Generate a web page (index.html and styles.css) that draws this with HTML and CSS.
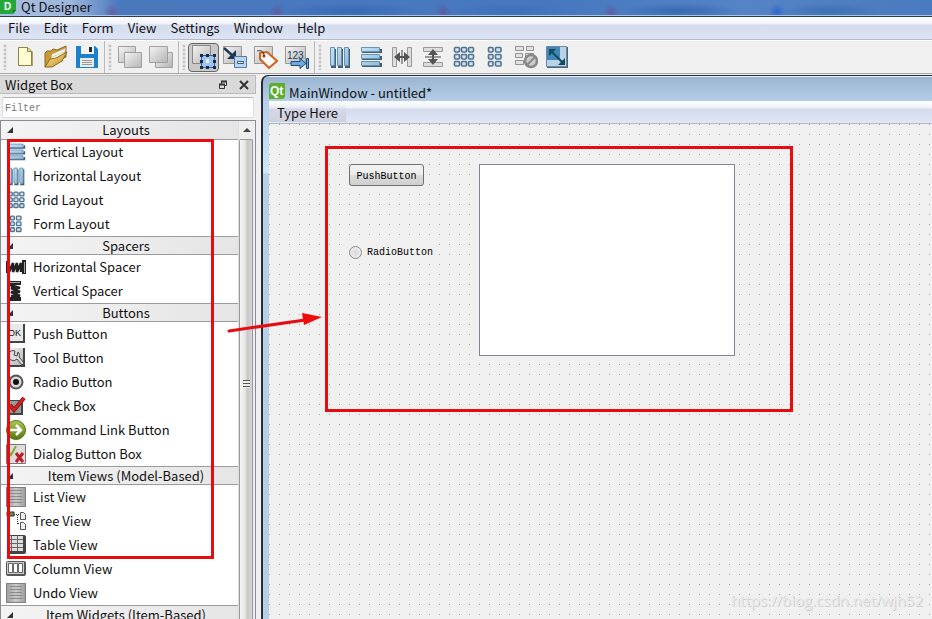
FILE: index.html
```html
<!DOCTYPE html>
<html lang="en">
<head>
<meta charset="utf-8">
<title>Qt Designer</title>
<link rel="stylesheet" href="styles.css">
</head>
<body>
<svg class="defs" aria-hidden="true">
  <defs>
    <linearGradient id="gGrey" x1="0" y1="0" x2="1" y2="1"><stop offset="0" stop-color="#f4f4f4"/><stop offset="1" stop-color="#b4b4b4"/></linearGradient>
    <linearGradient id="gBlue" x1="0" y1="0" x2="1" y2="1"><stop offset="0" stop-color="#c4e6fb"/><stop offset="1" stop-color="#8fbbdc"/></linearGradient>
    <linearGradient id="gGold" x1="0" y1="0" x2="1" y2="1"><stop offset="0" stop-color="#fbe7a0"/><stop offset="1" stop-color="#c78f1e"/></linearGradient>
    <linearGradient id="gGreen" x1="0" y1="0" x2="0" y2="1"><stop offset="0" stop-color="#a9c957"/><stop offset="1" stop-color="#56770f"/></linearGradient>
    <linearGradient id="gSheet"><stop offset="0" stop-color="#999"/><stop offset=".5" stop-color="#ccc"/><stop offset="1" stop-color="#999"/></linearGradient>
    <symbol id="vbars" viewBox="0 0 24 24"><path d="M7 4v18H3M14 4v18h-4M21 4v18h-4" fill="none" stroke="#3f5f7a" stroke-width="2"/><g fill="url(#gBlue)" stroke="#6f91ad"><path d="M2.500 2.500h4v18h-4zM9.500 2.500h4v18h-4zM16.500 2.500h4v18h-4z"/></g></symbol>
    <symbol id="hbars" viewBox="0 0 24 24"><path d="M3 7h19V4M3 14h19v-3M3 21h19v-3" fill="none" stroke="#3f5f7a" stroke-width="2"/><g fill="url(#gBlue)" stroke="#6f91ad"><path d="M2.500 2.500h18v4h-18zM2.500 9.500h18v4h-18zM2.500 16.500h18v4h-18z"/></g></symbol>
    <symbol id="grid" viewBox="0 0 24 24"><g fill="#cde7f8" stroke="#54728d" stroke-width="1.600"><rect x="2.500" y="2.500" width="5" height="4.500" rx="1"/><rect x="9.500" y="2.500" width="5" height="4.500" rx="1"/><rect x="16.500" y="2.500" width="5" height="4.500" rx="1"/><rect x="2.500" y="9.500" width="5" height="4.500" rx="1"/><rect x="9.500" y="9.500" width="5" height="4.500" rx="1"/><rect x="16.500" y="9.500" width="5" height="4.500" rx="1"/><rect x="2.500" y="16.500" width="5" height="4.500" rx="1"/><rect x="9.500" y="16.500" width="5" height="4.500" rx="1"/><rect x="16.500" y="16.500" width="5" height="4.500" rx="1"/></g></symbol>
    <symbol id="form" viewBox="0 0 24 24"><g fill="#cde7f8" stroke="#54728d" stroke-width="1.600"><rect x="5.500" y="2.500" width="4.500" height="4.500" rx="1"/><rect x="12.500" y="2.500" width="5.500" height="4.500" rx="1"/><rect x="5.500" y="9.500" width="4.500" height="4.500" rx="1"/><rect x="12.500" y="9.500" width="5.500" height="4.500" rx="1"/><rect x="5.500" y="16.500" width="4.500" height="4.500" rx="1"/><rect x="12.500" y="16.500" width="5.500" height="4.500" rx="1"/></g></symbol>
    <symbol id="sheet" viewBox="0 0 20 20"><path d="M0 0h20v20H0z" fill="url(#gSheet)"/><path d="M4 3.500h12M4 6.500h12M4 9.500h12M4 12.500h12M4 15.500h12" stroke="#8a8a8a"/><path d="M.5.500h19v19H.5z" fill="none" stroke="#808080"/></symbol>
  </defs>
</svg>

<header class="titlebar">
  <svg class="app-icon" viewBox="0 0 16 14"><path d="M0 0h16v10l-3 4H0z" fill="#25a83a"/><path d="M13 14v-4h3z" fill="#127b24"/><text x="4" y="10" class="app-letter">D</text></svg>
  <span class="app-name">Qt Designer</span>
</header>

<nav class="menubar" aria-label="Main menu">
  <button>File</button><button>Edit</button><button>Form</button><button>View</button><button>Settings</button><button>Window</button><button>Help</button>
</nav>

<div class="toolbar" role="toolbar" aria-label="Tools">
  <div class="tools"><i class="handle"></i>
    <button aria-label="New"><svg viewBox="0 0 24 24"><path d="M6 3h10l4 4v14H6z" fill="#aaa268"/><path d="M5.500 2.500h9l4 4v14h-13z" fill="#fffbd2" stroke="#94823e"/><path d="M14.500 2.500v4h4" fill="#e6d9a0" stroke="#94823e"/></svg></button>
    <button aria-label="Open"><svg viewBox="0 0 24 24"><path d="M1 22V8l2-2h4l2-2 4 1 9-4v11z" fill="#c99a35" stroke="#8a6820"/><path d="M6 16 8 9l14-6-3 10-9 7z" fill="#fff" stroke="#b79b5b" stroke-width=".7"/><path d="M8 12l12-5" stroke="#ddc987"/><path d="m1 22 5-8 6-1 11-6-5 9-10 6z" fill="url(#gGold)" stroke="#8a6820"/></svg></button>
    <button aria-label="Save"><svg viewBox="0 0 24 24"><path d="M1 1h19l3 3v19H1z" fill="#1c81cd"/><path d="M6 1h13v8H6z" fill="#f3f3f3"/><path d="M14 2h3v5h-3z" fill="#252b32"/><path d="M5 13h14v9H5z" fill="#ececec"/><path d="M7 15.500h10M7 17.500h10M7 19.500h10" stroke="#999"/></svg></button>
  </div>
  <div class="tools"><i class="handle"></i>
    <button aria-label="Send to back"><svg viewBox="0 0 24 24"><g fill="url(#gGrey)" stroke="#a0a0a0"><path d="M.5 1.500h17v16H.5z"/><path d="M6.500 7.500h17v15h-17z"/></g></svg></button>
    <button aria-label="Bring to front"><svg viewBox="0 0 24 24"><g fill="url(#gGrey)" stroke="#a0a0a0"><path d="M6.500 7.500h17v15h-17z"/><path d="M.5 1.500h18v16H.5z"/></g></svg></button>
  </div>
  <div class="tools"><i class="handle"></i>
    <button class="active" aria-label="Edit widgets" aria-pressed="true"><svg viewBox="0 0 24 24"><path d="M.5.500h18v18H.5z" fill="url(#gGrey)" stroke="#888"/><path d="M9.500 10.500h13v12h-13z" fill="#9cc5f6" stroke="#396292"/><path d="M8 9h3v3H8zM14 9h3v3h-3zM21 9h3v3h-3zM8 15h3v3H8zM21 15h3v3h-3zM8 21h3v3H8zM14 21h3v3h-3zM21 21h3v3h-3z" fill="#172c4b"/><path d="M14 14h3v4h-3z" fill="#e8f5ff"/></svg></button>
    <button aria-label="Edit signals and slots"><svg viewBox="0 0 24 24"><path d="M.5 1.500h18v17H.5z" fill="url(#gGrey)" stroke="#999"/><path d="m1 3 9 8" stroke="#1e3656" stroke-width="2.500"/><path d="M13 5v9H4z" fill="#1e3656"/><path d="M11.500 11.500h12v11h-12z" fill="#b8d5f5" stroke="#547aa5"/><path d="M14.500 16.500h6v2h-6z" fill="#fff" stroke="#315c8a"/></svg></button>
    <button aria-label="Edit buddies"><svg viewBox="0 0 24 24"><path d="M.5 1.500h18v17H.5z" fill="url(#gGrey)" stroke="#999"/><path d="m6 8 7-1 10 9-8 7-9-9z" fill="#f9f9f9" stroke="#d2601c" stroke-width="2"/><circle cx="10" cy="11" r="1.500" fill="#a53d0c"/><path d="M3 6c4-1 7 0 7 5" fill="none" stroke="#333"/></svg></button>
    <button aria-label="Edit tab order"><svg viewBox="0 0 24 24"><path d="M.5 1.500h20v17H.5z" fill="url(#gGrey)" stroke="#999"/><text x="2" y="14" class="icon-numbers">123</text><path d="M6 16.500h9v-3l6 5-6 5v-3H6zM21.500 13.500h2v10h-2z" fill="#70a8df" stroke="#1c4d83"/></svg></button>
  </div>
  <div class="tools last"><i class="handle"></i>
    <button aria-label="Lay out horizontally"><svg><use href="#vbars"/></svg></button>
    <button aria-label="Lay out vertically"><svg><use href="#hbars"/></svg></button>
    <button aria-label="Horizontal splitter"><svg viewBox="0 0 24 24"><g fill="#ddd" stroke="#999"><path d="M2.500 2.500h4v19h-4zM17.500 2.500h4v19h-4z"/></g><path d="M12 5v14" stroke="#999" stroke-width="2"/><path d="M6 12h12" stroke="#555" stroke-width="2"/><path d="m4 12 6-5v10zM20 12l-6-5v10z" fill="#555"/></svg></button>
    <button aria-label="Vertical splitter"><svg viewBox="0 0 24 24"><g fill="#ddd" stroke="#999"><path d="M2.500 2.500h19v4h-19zM2.500 17.500h19v4h-19z"/></g><path d="M4 12h16" stroke="#999" stroke-width="2"/><path d="M12 6v12" stroke="#555" stroke-width="2"/><path d="m12 4-5 6h10zM12 20l-5-6h10z" fill="#555"/></svg></button>
    <button aria-label="Lay out in a grid"><svg><use href="#grid"/></svg></button>
    <button aria-label="Lay out in a form"><svg><use href="#form"/></svg></button>
    <button aria-label="Break layout"><svg viewBox="0 0 24 24"><g fill="#e2e2e2" stroke="#929292"><path d="M1.500 1.500h8v4h-8zM12.500 1.500h7v4h-7zM1.500 8.500h7v4h-7zM11.500 8.500h8v4h-8zM1.500 15.500h8v4h-8z"/></g><circle cx="17" cy="16" r="6" fill="#ccc" stroke="#888" stroke-width="2.500"/><path d="m13 20 8-8" stroke="#888" stroke-width="2"/></svg></button>
    <button aria-label="Adjust size"><svg viewBox="0 0 24 24"><path d="M2 2h21v21H2z" fill="#45677e"/><path d="M1.500 1.500h20v20h-20z" fill="#b8d3e6" stroke="#6d8ba0"/><path d="M2 2h13v13H2z" fill="#3f88b8"/><path d="m6 6 12 12" stroke="#17485e" stroke-width="2"/><path d="M4 4h7l-7 7zM20 20h-7l7-7z" fill="#17485e"/></svg></button>
  </div>
</div>

<main class="workspace">
  <aside class="dock">
    <div class="dock-title"><span>Widget Box</span>
      <button aria-label="Float"><svg viewBox="0 0 10 10"><path d="M3.500 4V1.500h5v4H7M1.500 4.500h5v4h-5z" fill="none" stroke="#333"/><path d="M3 1.500h6M1 4.500h6" stroke="#333" stroke-width="2"/></svg></button>
      <button aria-label="Close"><svg viewBox="0 0 10 10"><path d="m1 1 8 8M9 1 1 9" stroke="#333" stroke-width="2"/></svg></button>
    </div>
    <input class="filter" type="text" placeholder="Filter" aria-label="Filter">
    <div class="list-frame">
      <div class="widget-list">
        <h2>Layouts</h2>
        <ul>
          <li><svg><use href="#hbars"/></svg>Vertical Layout</li>
          <li><svg><use href="#vbars"/></svg>Horizontal Layout</li>
          <li><svg><use href="#grid"/></svg>Grid Layout</li>
          <li><svg><use href="#form"/></svg>Form Layout</li>
        </ul>
        <h2>Spacers</h2>
        <ul>
          <li><svg viewBox="0 0 20 20"><path d="M0 4h4v12H0zM16 3h4v14h-4z" fill="#222"/><path d="m3 15 4-9v9l4-9v9l4-9v9" fill="none" stroke="#222" stroke-width="2.500"/><path d="M18.500 5v11" stroke="#aaa"/></svg>Horizontal Spacer</li>
          <li><svg viewBox="0 0 20 20"><path d="M2 0h13v4H2zM2 16h13v4H2z" fill="#222"/><path d="m4 4 10 3H5l9 4H5l9 4H5" fill="none" stroke="#222" stroke-width="2.500"/><path d="M4 1.500h10" stroke="#aaa"/></svg>Vertical Spacer</li>
        </ul>
        <h2>Buttons</h2>
        <ul>
          <li><svg viewBox="0 0 20 20"><path d="M1 0h18v19H1z" fill="#444"/><path d="M1 0h16v17H1z" fill="#e8e8e8"/><text x="2" y="12" class="ok">OK</text></svg>Push Button</li>
          <li><svg viewBox="0 0 20 20"><path d="M1 0h18v19H1z" fill="#444"/><path d="M1 0h16v17H1z" fill="url(#gGrey)"/><path d="M9 3a5 5 0 1 0 2 8l5 6 2-2-5-6c1-2 0-4-1-5l-1 4-3-1z" fill="#ddd" stroke="#444"/></svg>Tool Button</li>
          <li><svg viewBox="0 0 20 20"><circle cx="10" cy="10" r="6.500" fill="#d9d9d9" stroke="#555" stroke-width="2"/><circle cx="10" cy="10" r="3" fill="#111"/></svg>Radio Button</li>
          <li><svg viewBox="0 0 20 20"><path d="M2 4h15v15H2z" fill="#444"/><path d="M3 5h12v12H3z" fill="#999"/><path d="m4 9 4 5L18 2" fill="none" stroke="#861013" stroke-width="4"/><path d="m4 9 4 5L18 2" fill="none" stroke="#d42025" stroke-width="2.500"/></svg>Check Box</li>
          <li><svg viewBox="0 0 20 20"><circle cx="10" cy="10" r="9.500" fill="url(#gGreen)" stroke="#56731a"/><path d="M4 10h10M10 5l5 5-5 5" fill="none" stroke="#fff" stroke-width="2.500"/></svg>Command Link Button</li>
          <li><svg viewBox="0 0 20 20"><path d="M.5.500h19v19H.5z" fill="#ddd" stroke="#777"/><path d="m3 8 2 3 5-9" fill="none" stroke="#7fae38" stroke-width="2"/><path d="m10 9 7 9M17 9l-7 9" stroke="#c21b25" stroke-width="3"/></svg>Dialog Button Box</li>
        </ul>
        <h2>Item Views (Model-Based)</h2>
        <ul>
          <li><svg><use href="#sheet"/></svg>List View</li>
          <li><svg viewBox="0 0 20 20"><path d="M1 1h7v4H1z" fill="#648a4d" stroke="#333"/><path d="M8 3.500h6M11.500 4v10M12 12.500h3" fill="none" stroke="#333" stroke-dasharray="1 1"/><path d="M14.500 1.500h3l2 2v5h-5zM14.500 11.500h3l2 2v5h-5z" fill="#eee" stroke="#555"/></svg>Tree View</li>
          <li><svg viewBox="0 0 20 20"><rect x="1" y="0" width="19" height="19" rx="2" fill="#444"/><path d="M2 1h15v15H2z" fill="#ddd"/><path d="M5.500 1v15M11.500 1v15M2 4.500h15M2 8.500h15M2 12.500h15" stroke="#666"/></svg>Table View</li>
          <li><svg viewBox="0 0 20 20"><rect x="0" y="2" width="20" height="15" rx="2" fill="#555"/><path d="M1 3h17v12H1z" fill="#ccc"/><g fill="#fff" stroke="#666"><path d="M2.500 4.500h4v9h-4zM7.500 4.500h4v9h-4zM12.500 4.500h4v9h-4z"/></g></svg>Column View</li>
          <li><svg><use href="#sheet"/></svg>Undo View</li>
        </ul>
        <h2>Item Widgets (Item-Based)</h2>
      </div>
      <div class="scrollbar" aria-hidden="true"><i class="up"></i><div class="thumb"><i></i></div></div>
    </div>
  </aside>

  <section class="mdi">
    <div class="mdi-title">
      <svg viewBox="0 0 16 16"><path d="M2 0h14v14l-2 2H0V2z" fill="#5cae2c"/><text x="1" y="12" class="qt-letter">Qt</text></svg>
      <span>MainWindow - untitled*</span>
    </div>
    <div class="form-menu"><button>Type Here</button></div>
    <div class="canvas">
      <button class="push">PushButton</button>
      <label class="radio"><input type="radio"><span>RadioButton</span></label>
      <div class="list-view"></div>
    </div>
  </section>
</main>

<div class="mark mark-list"></div>
<div class="mark mark-form"></div>
<svg class="arrow" viewBox="0 0 96 24"><path d="M2 18 78 7" stroke="#e80c10" stroke-width="3" stroke-linecap="round"/><path d="m75 0 20 4-18 8z" fill="#f00a0a"/></svg>
<span class="watermark">https://blog.csdn.net/wjh52</span>
</body>
</html>
```
FILE: styles.css
```css
* { box-sizing: border-box; }
body {
  margin: 0;
  height: 100vh;
  overflow: hidden;
  position: relative;
  display: flex;
  flex-direction: column;
  background: #f0f0f0;
  color: #111;
  font: 13px/18px "Noto Sans CJK SC", "Noto Sans", sans-serif;
}
button { margin: 0; padding: 0; border: 0; background: none; color: inherit; font: inherit; }
svg { display: block; flex: none; }
ul, h2 { margin: 0; padding: 0; font: inherit; list-style: none; }
.defs { position: absolute; width: 0; height: 0; }

.titlebar {
  flex: none;
  height: 17px;
  display: flex;
  gap: 5px;
  border-bottom: 1px solid #2c3a5c;
  box-shadow: inset 0 -1px #a9c4e8;
  background:
    radial-gradient(circle at 112px 12px, #6a4d90a0 0, transparent 8px),
    radial-gradient(circle at 277px 12px, #6a4d90a0 0, transparent 8px),
    radial-gradient(circle at 443px 12px, #6a4d90a0 0, transparent 8px),
    radial-gradient(circle at 611px 12px, #6a4d90a0 0, transparent 8px),
    radial-gradient(circle at 777px 12px, #2d66cf 0, transparent 8px),
    radial-gradient(ellipse 70px 8px at 350px 11px, #376ab4, transparent),
    radial-gradient(ellipse 60px 8px at 510px 11px, #3d70b8, transparent),
    radial-gradient(ellipse 60px 8px at 680px 11px, #376ab0, transparent),
    radial-gradient(ellipse 50px 8px at 830px 11px, #3d70b4, transparent),
    linear-gradient(90deg, #a9bfe0, #9db6dc 70px, #4a78bd 120px, #4778bf 60%, #5583c6 80%, #4a7abf);
}
.app-icon { width: 16px; height: 14px; }
.app-letter { font: bold 10px "Liberation Sans", sans-serif; fill: #fff; }
.app-name { line-height: 13px; }

.menubar {
  flex: none;
  height: 23px;
  display: flex;
  gap: 14px;
  padding: 0 8px;
  border-bottom: 1px solid #b3b9c8;
  background: linear-gradient(#fff, #eef1f7 7px, #d5dbee 8px, #dce4f5);
}
.toolbar {
  flex: none;
  height: 34px;
  display: flex;
  border-top: 1px solid #fff;
  border-bottom: 1px solid #aaa6a4;
}
.tools { display: flex; align-items: center; padding-right: 2px; border-right: 1px solid #b8b8b8; }
.tools.last { border: 0; }
.handle {
  width: 9px;
  height: 26px;
  background: radial-gradient(circle at 5px 2px, #aaa 0, transparent 2px) 0 0 / 9px 4px;
}
.tools button { width: 31px; height: 29px; display: grid; place-items: center; }
.tools svg { width: 24px; height: 24px; }
.tools .active { border: 1px solid #666; border-radius: 4px; background: #c9c9c9; }
.icon-numbers { font: 10px "Liberation Sans", sans-serif; fill: #173b66; }

.workspace { flex: 1; min-height: 0; display: grid; grid-template-columns: 256px minmax(0, 1fr); gap: 5px; }
.dock { min-height: 0; display: flex; flex-direction: column; padding-top: 1px; }
.dock-title {
  flex: none;
  height: 19px;
  display: flex;
  align-items: center;
  gap: 11px;
  padding: 0 6px 0 5px;
  border: 1px solid #bcbcbc;
  border-left: 0;
  background: #d9d9d9;
}
.dock-title span { flex: 1; }
.dock-title svg { width: 10px; height: 10px; }
.filter {
  flex: none;
  height: 21px;
  margin: 3px 2px 2px;
  padding: 2px 2px 0;
  border: 1px solid #ddd;
  border-top-color: #b5b5b5;
  border-radius: 2px;
  background: #fff;
  font: 10px/16px "Liberation Mono", monospace;
}
.filter::placeholder { color: #777; opacity: 1; }
.list-frame {
  flex: 1;
  min-height: 0;
  display: flex;
  border: 1px solid #898c95;
  border-bottom: 0;
  background: #fff;
}
.widget-list { flex: 1; overflow: hidden; }
.widget-list h2 {
  position: relative;
  height: 19px;
  padding-left: 13px;
  border-bottom: 1px solid #9c9c9c;
  background: linear-gradient(90deg, #f4f4f4, #e5e5e5);
  text-align: center;
}
.widget-list ul + h2 { border-top: 1px solid #9c9c9c; }
.widget-list h2::before {
  content: "";
  position: absolute;
  left: 6px;
  top: 6px;
  border-left: 6px solid transparent;
  border-bottom: 6px solid #333;
}
.widget-list li { height: 24px; display: flex; align-items: center; gap: 7px; padding-left: 5px; }
.widget-list svg { width: 20px; height: 20px; }
.ok { font: 9px "Liberation Sans", sans-serif; fill: #111; }
.scrollbar { width: 17px; display: flex; flex-direction: column; border-left: 1px solid #ddd; background: #eee; }
.up { height: 18px; display: grid; place-items: center; }
.up::before { content: ""; border: 4px solid transparent; border-top: 0; border-bottom-color: #444; }
.thumb {
  flex: 1;
  display: grid;
  place-items: center;
  padding-top: 8px;
  margin-right: 2px;
  border: 1px solid #999;
  border-bottom: 0;
  border-radius: 2px 2px 0 0;
  background: linear-gradient(90deg, #f6f6f6, #e4e4e4 45%, #c8c8c8 60%, #d6d6d6);
}
.thumb i { width: 7px; height: 8px; background: repeating-linear-gradient(#555 0 1px, #eee 1px 3px); }

.mdi {
  min-width: 0;
  display: flex;
  flex-direction: column;
  margin-top: 1px;
  padding-left: 6px;
  border: 2px solid #252c38;
  border-width: 1px 0 0 2px;
  border-radius: 7px 0 0 0;
  background: linear-gradient(#9ab4cf, #b5cfea 26px, #d3e6f7 97px, #b8cfe6 98px);
}
.mdi-title { flex: none; height: 25px; display: flex; align-items: center; gap: 4px; padding-top: 8px; border-top: 1px solid #e5f0fa; }
.mdi-title svg { width: 16px; height: 16px; margin-top: -4px; }
.qt-letter { font: bold 12px "Liberation Sans", sans-serif; fill: #fff; }
.form-menu {
  flex: none;
  height: 23px;
  border-bottom: 1px solid #b5bac8;
  background: linear-gradient(#fff, #eef1f7 7px, #d6daec 8px, #dfe8f6);
}
.form-menu button { height: 19px; margin-top: 2px; padding: 0 8px; background: linear-gradient(transparent, #cdd0dc); }
.canvas {
  flex: 1;
  position: relative;
  background:
    repeating-linear-gradient(90deg, transparent 0 1px, #f0f0f0 1px 10px),
    repeating-linear-gradient(#a8a8a8 0 1px, #f0f0f0 1px 10px);
  font: 10px/14px "Liberation Mono", monospace;
  color: #000;
}
.push {
  position: absolute;
  left: 80px;
  top: 40px;
  width: 75px;
  height: 22px;
  padding-top: 3px;
  border: 1px solid #707070;
  border-radius: 3px;
  background: linear-gradient(#f3f3f3, #ebebeb 49%, #dcdcdc 50%, #cfcfcf);
}
.radio { position: absolute; left: 78px; top: 117px; display: flex; align-items: center; gap: 5px; height: 22px; padding: 2px; background: #f0f0f0; }
.radio span { padding-top: 2px; }
.radio input {
  appearance: none;
  width: 13px;
  height: 13px;
  margin: 0;
  border: 1px solid #8a8a8a;
  border-radius: 50%;
  background: radial-gradient(#d8d8d8, #f4f4f4);
}
.list-view { position: absolute; left: 210px; top: 40px; width: 256px; height: 192px; border: 1px solid #828790; background: #fff; }

.mark { position: absolute; border: 3px solid #e80c10; pointer-events: none; }
.mark-list { left: 7px; top: 139px; width: 207px; height: 420px; }
.mark-form { left: 325px; top: 146px; width: 468px; height: 266px; }
.arrow { position: absolute; left: 227px; top: 313px; width: 96px; height: 24px; fill: none; }
.watermark {
  position: absolute;
  right: 9px;
  bottom: 8px;
  font: 15px/22px "Open Sans", sans-serif;
  color: #e9e9e9;
  text-shadow: 1px 1px #d0d0d0;
}
```
